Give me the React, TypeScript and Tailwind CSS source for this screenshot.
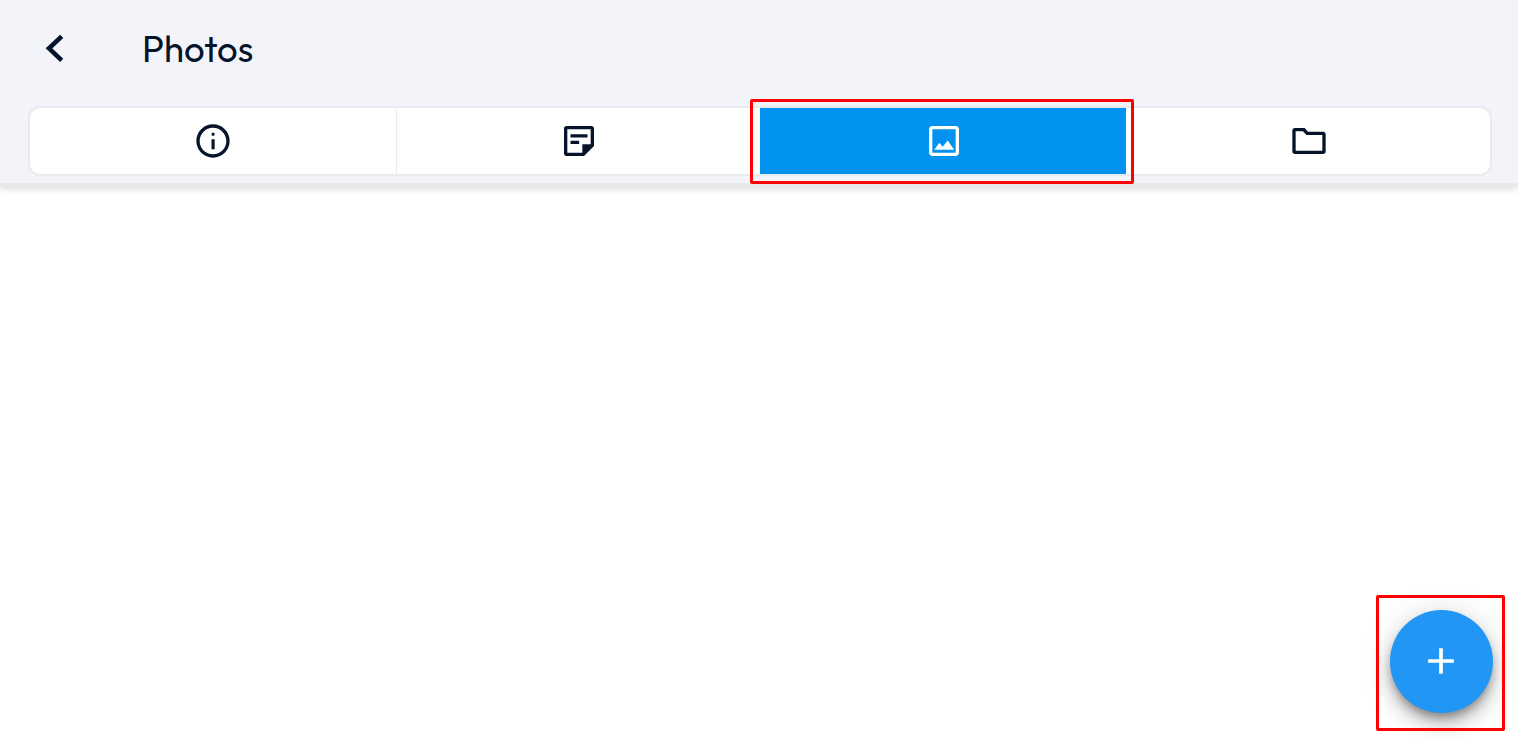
import type { ReactNode } from "react";

function Icon({ children }: { children: ReactNode }) {
  return (
    <svg viewBox="0 0 24 24" className="h-10 w-10" fill="currentColor" aria-hidden="true">
      {children}
    </svg>
  );
}

const infoIcon = (
  <Icon>
    <path d="M11.100 17h1.900v-6h-1.900v6zm.9-15C6.480 2 2 6.480 2 12s4.480 10 10 10 10-4.480 10-10S17.520 2 12 2zm0 18c-4.410 0-8-3.590-8-8s3.590-8 8-8 8 3.590 8 8-3.590 8-8 8z" />
    <rect x="11.150" y="7.100" width="1.800" height="1.800" rx="0.500" />
  </Icon>
);

const noteIcon = (
  <Icon>
    <path
      fillRule="evenodd"
      d="M4.500 3h15c.83 0 1.500.67 1.500 1.500V15l-6 6H4.500C3.670 21 3 20.330 3 19.500V4.500C3 3.670 3.670 3 4.500 3ZM5 5v14h9v-5h5V5Z"
    />
    <path d="M6.900 8h10.200v1.900H6.900zM6.900 11.900h5.200v1.900H6.900z" />
  </Icon>
);

const imageIcon = (
  <Icon>
    <path
      fillRule="evenodd"
      d="M5 3h14c1.100 0 2 .9 2 2v14c0 1.100-.9 2-2 2H5c-1.100 0-2-.9-2-2V5c0-1.100.9-2 2-2Zm0 2v14h14V5Z"
    />
    <path d="M6.200 17.200l3-4.200 2 2.400 3-3.700 3.900 5.500z" />
  </Icon>
);

const folderIcon = (
  <Icon>
    <path
      fillRule="evenodd"
      d="M3.500 4.200h5.900l2 2.200h9.100c.83 0 1.500.67 1.500 1.500v10.400c0 .83-.67 1.500-1.500 1.500h-17c-.83 0-1.500-.67-1.500-1.500V5.700C2 4.870 2.670 4.200 3.500 4.200ZM4 6.100v11.800h16V8.400h-9.500L8.300 6.100Z"
    />
  </Icon>
);

export default function App() {
  return (
    <div className="relative flex h-[745px] w-full flex-col overflow-hidden bg-white text-[#06142b]">
      <header className="flex h-[187px] shrink-0 flex-col border-b-4 border-[#e8e8ed] bg-[#f3f4fa] pr-[26px] pl-[28px] shadow-[0_2px_7px_rgba(0,0,0,0.14)]">
        <div className="flex h-[106px] shrink-0 items-center pb-[9px] pl-4">
          <button aria-label="Back" className="mb-[2px] flex h-8 w-6 items-center">
            <svg viewBox="0 0 24 32" className="h-8 w-6" fill="none" stroke="currentColor" strokeWidth="4.600">
              <path d="M17.700 4.300L5 16.300l12.700 12" />
            </svg>
          </button>
          <h1 className="ml-[74px] font-[Outfit,Lato,sans-serif] text-[36.500px] leading-none">Photos</h1>
        </div>
        <nav className="grid h-[70px] shrink-0 grid-cols-[366px_365px_365px_1fr] overflow-hidden rounded-[12px] border-2 border-[#e9e9ef] bg-white">
          <button className="-mr-px flex items-center justify-center border-r border-[#ebebef] pr-px">{infoIcon}</button>
          <button className="flex items-center justify-center">{noteIcon}</button>
          <button className="-ml-px flex items-center justify-center bg-[#0293f1] pl-px text-white">{imageIcon}</button>
          <button className="flex items-center justify-center pl-px">{folderIcon}</button>
        </nav>
      </header>
      <main className="flex-1" />
      <div className="pointer-events-none absolute top-[99px] left-[750px] h-[85px] w-[384px] rounded-[2px] border-[3px] border-[#ff0000]" />
      <button
        aria-label="Add photo"
        className="absolute top-[610px] left-[1390px] flex h-[102.500px] w-[102.500px] items-center justify-center rounded-full bg-[#2296f4] text-white shadow-[0_6px_9px_-2px_rgba(0,0,0,0.3),0_11px_18px_rgba(0,0,0,0.22),0_2px_33px_rgba(0,0,0,0.12)]"
      >
        <svg viewBox="0 0 24 24" className="mb-[1px] h-11 w-11" fill="currentColor">
          <path d="M19 13h-6v6h-2v-6H5v-2h6V5h2v6h6z" />
        </svg>
      </button>
      <div className="absolute bottom-0 left-0 h-[4px] w-full bg-white" />
      <div className="pointer-events-none absolute top-[595px] left-[1376px] h-[136px] w-[129px] rounded-[2px] border-[3px] border-[#ff0000]" />
    </div>
  );
}
